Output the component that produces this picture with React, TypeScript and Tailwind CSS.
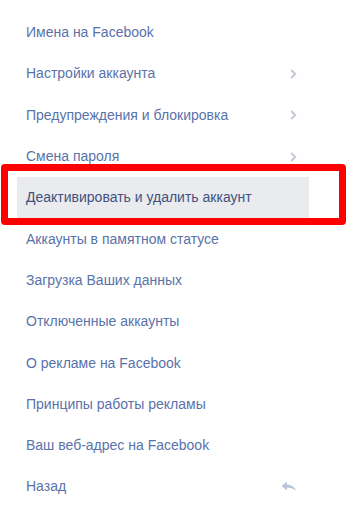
import React from "react";

const items: { label: string; icon?: "chev" | "back"; selected?: boolean }[] = [
  { label: "Имена на Facebook" },
  { label: "Настройки аккаунта", icon: "chev" },
  { label: "Предупреждения и блокировка", icon: "chev" },
  { label: "Смена пароля", icon: "chev" },
  { label: "Деактивировать и удалить аккаунт", selected: true },
  { label: "Аккаунты в памятном статусе" },
  { label: "Загрузка Ваших данных" },
  { label: "Отключенные аккаунты" },
  { label: "О рекламе на Facebook" },
  { label: "Принципы работы рекламы" },
  { label: "Ваш веб-адрес на Facebook" },
  { label: "Назад", icon: "back" },
];

function Chevron() {
  return (
    <svg width="7" height="10" viewBox="0 0 7 10" className="shrink-0">
      <path d="M1.2 1 L5.2 5 L1.2 9" fill="none" stroke="#c4cad5" strokeWidth="2" />
    </svg>
  );
}

function Back() {
  return (
    <svg width="16" height="11" viewBox="0 0 16 11" className="shrink-0">
      <path d="M6 0.5 L0.5 5 L6 9.5 L6 6.8 C9.5 6.6 12.5 7.5 15 10 C14 6.3 11 3.8 6 3.4 Z" fill="#bcc6da" />
    </svg>
  );
}

export default function App() {
  return (
    <div
      className="relative w-[349px] h-[518px] bg-white pt-[12px]"
      style={{ fontFamily: '"Liberation Sans", Arial, sans-serif' }}
    >
      <ul className="flex flex-col">
        {items.map((it) => (
          <li
            key={it.label}
            className={`ml-[17px] w-[292px] h-[41.3px] flex items-center justify-between pl-[9px] pr-[12px] text-[14px] ${
              it.selected ? "bg-[#e9ebee] text-[#42527d]" : "text-[#5a72a9]"
            }`}
          >
            <span>{it.label}</span>
            {it.icon === "chev" && <Chevron />}
            {it.icon === "back" && <Back />}
          </li>
        ))}
      </ul>
      <div className="absolute left-[1px] top-[164px] w-[345px] h-[61px] border-[7px] border-[#ff0000] rounded-[4px]" />
    </div>
  );
}
